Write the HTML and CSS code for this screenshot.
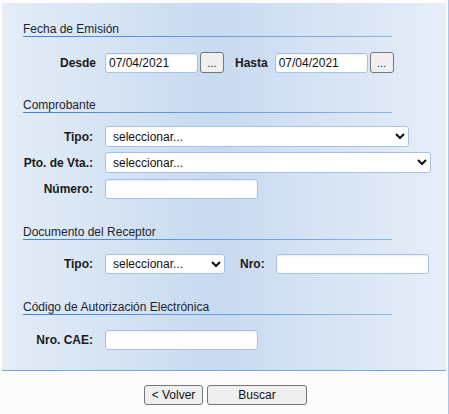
FILE: index.html
```html
<!DOCTYPE html>
<html lang="es">
<head>
<meta charset="utf-8">
<title>Consulta de Comprobantes</title>
<link rel="stylesheet" href="styles.css">
</head>
<body>
<div class="frame">
  <div class="panel">
    <div class="sec-title">Fecha de Emisión</div>
    <div class="row row-date">
      <label class="lbl lbl-date">Desde</label>
      <input class="field f-date" type="text" value="07/04/2021">
      <button class="btn-dots" type="button">...</button>
      <label class="lbl-inline lbl-hasta">Hasta</label>
      <input class="field f-date" type="text" value="07/04/2021">
      <button class="btn-dots" type="button">...</button>
    </div>

    <div class="sec-title sec-comp">Comprobante</div>
    <div class="row row-sel1">
      <label class="lbl">Tipo:</label>
      <select class="sel s-tipo"><option>seleccionar...</option></select>
    </div>
    <div class="row row-sel2">
      <label class="lbl">Pto. de Vta.:</label>
      <select class="sel s-pto"><option>seleccionar...</option></select>
    </div>
    <div class="row row-num">
      <label class="lbl">Número:</label>
      <input class="field f-wide" type="text">
    </div>

    <div class="sec-title sec-doc">Documento del Receptor</div>
    <div class="row row-doc">
      <label class="lbl">Tipo:</label>
      <select class="sel s-doc"><option>seleccionar...</option></select>
      <label class="lbl-inline lbl-nro">Nro:</label>
      <input class="field f-wide" type="text">
    </div>

    <div class="sec-title sec-cae">Código de Autorización Electrónica</div>
    <div class="row row-cae">
      <label class="lbl">Nro. CAE:</label>
      <input class="field f-wide" type="text">
    </div>
  </div>
  <div class="footer">
    <button class="btn btn-volver" type="button">&lt; Volver</button>
    <button class="btn btn-buscar" type="button">Buscar</button>
  </div>
</div>
</body>
</html>
```

FILE: styles.css
```css
html, body {
  margin: 0;
  padding: 0;
  background: #fcfcfc;
}
body {
  font-family: "Liberation Sans", Arial, sans-serif;
  font-size: 12px;
  color: #1a1a1a;
}
.frame {
  width: 448px;
  min-height: 414px;
  border-right: 1px solid #a8c6f0;
  overflow: hidden;
}
.panel {
  margin: 3px 0 0 2px;
  width: 444px;
  padding: 19px 0 20px 0;
  background: linear-gradient(to right, #e4edf8 0%, #c8daf0 48%, #e6eef9 100%);
  border-bottom: 1px solid #72a6ea;
}
.sec-title {
  margin-left: 21px;
  width: 369px;
  line-height: 14px;
  height: 14px;
  color: #1c2430;
  border-bottom: 1px solid #4a8ee0;
  border-image: linear-gradient(to right, #3d84dd, #8cb6ea) 1;
}
.sec-comp { margin-top: 25px; }
.sec-doc { margin-top: 26px; }
.sec-cae { margin-top: 26px; }

.row {
  display: flex;
  align-items: center;
}
.row-date { margin-top: 15px; height: 21px; }
.row-sel1 { margin-top: 13px; height: 21px; }
.row-sel2 { margin-top: 5px; height: 21px; }
.row-num { margin-top: 6px; height: 20px; }
.row-doc { margin-top: 14px; height: 20px; }
.row-cae { margin-top: 15px; height: 20px; }

.lbl {
  width: 91px;
  margin-right: 12px;
  text-align: right;
  font-weight: bold;
}
.lbl-date {
  width: 94px;
  margin-right: 9px;
}
.lbl-inline {
  font-weight: bold;
}
.lbl-hasta { margin-left: 11px; margin-right: 7px; }
.lbl-nro { margin-left: 15px; margin-right: 11px; }

.field {
  box-sizing: border-box;
  height: 20px;
  margin: 0;
  padding: 0 3px;
  border: 1px solid #a4c2ea;
  border-radius: 3px;
  background: #fff;
  box-shadow: inset 0 1px 2px rgba(0, 0, 0, 0.08);
  font-family: "Liberation Sans", Arial, sans-serif;
  font-size: 12px;
  color: #111;
  outline: none;
}
.f-date { width: 93px; }
.f-wide { width: 153px; }

.sel {
  box-sizing: border-box;
  height: 21px;
  margin: 0;
  padding: 0 0 0 3px;
  border: 1px solid #a4c2ea;
  border-radius: 3px;
  background-color: #fff;
  font-family: "Liberation Sans", Arial, sans-serif;
  font-size: 12px;
  color: #111;
}
.s-tipo { width: 304px; }
.s-pto { width: 326px; }
.s-doc { width: 120px; height: 20px; }

.btn-dots {
  box-sizing: border-box;
  width: 24px;
  height: 21px;
  margin: 0 0 0 2px;
  padding: 0;
  border: 1px solid #767676;
  border-radius: 3px;
  background: #efefef;
  font-family: "Liberation Sans", Arial, sans-serif;
  font-size: 11px;
  color: #111;
}

.footer {
  display: flex;
  justify-content: center;
  gap: 4px;
  padding: 14px 0 0 3px;
}
.btn {
  box-sizing: border-box;
  height: 20px;
  margin: 0;
  padding: 0;
  border: 1px solid #767676;
  border-radius: 3px;
  background: #efefef;
  font-family: "Liberation Sans", Arial, sans-serif;
  font-size: 12px;
  color: #111;
}
.btn-volver { width: 59px; }
.btn-buscar { width: 100px; }
```
